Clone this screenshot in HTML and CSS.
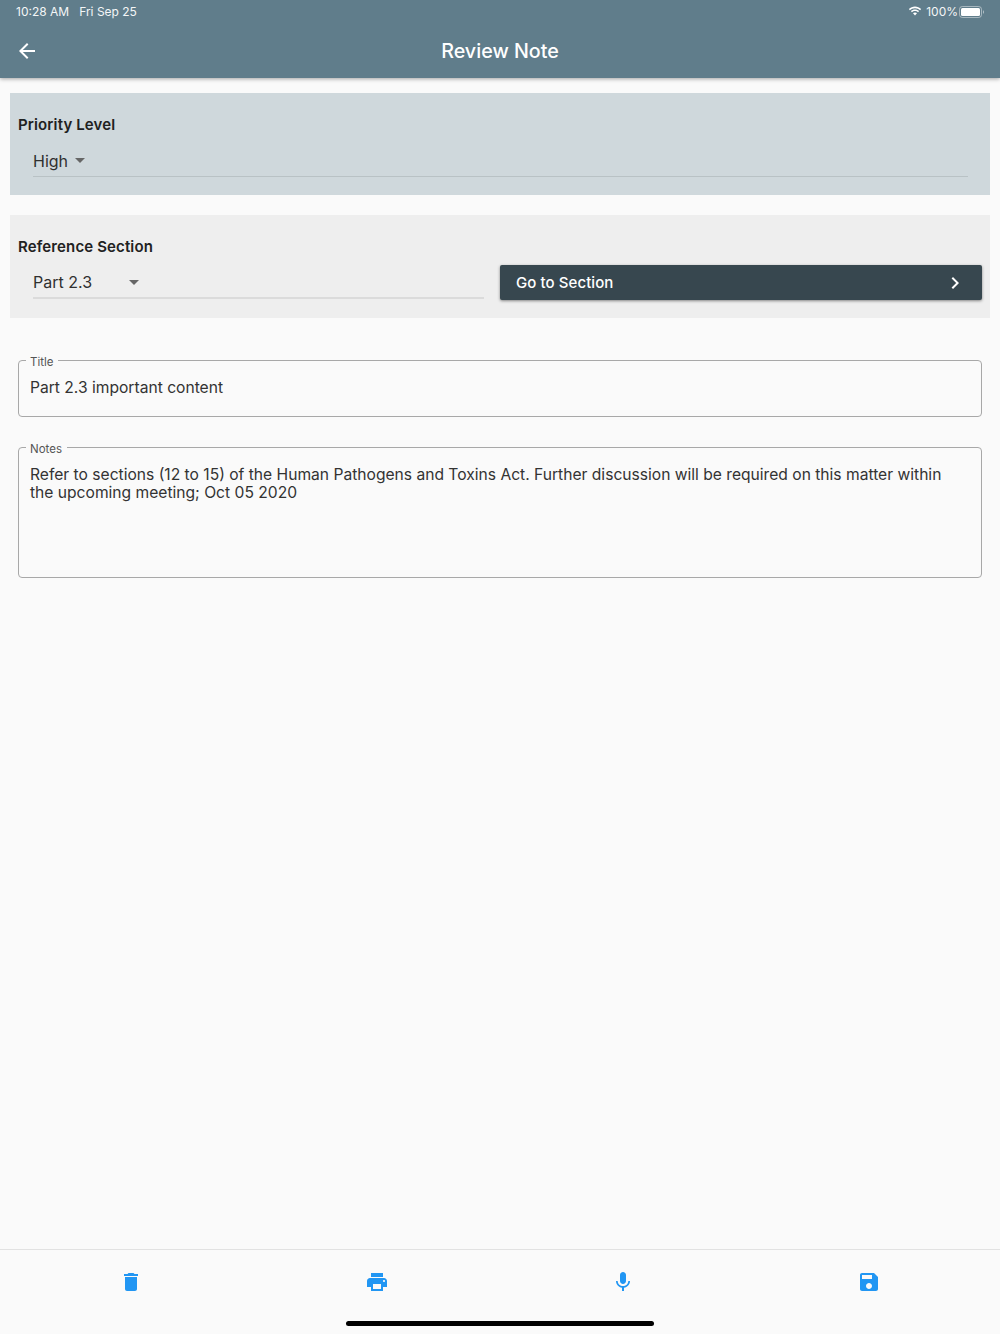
FILE: index.html
```html
<!DOCTYPE html>
<html lang="en">
<head>
<meta charset="utf-8">
<title>Review Note</title>
<link rel="stylesheet" href="styles.css">
</head>
<body>
<div class="page">
  <header class="appbar">
    <div class="status">
      <div class="status-left"><span>10:28 AM</span><span>Fri Sep 25</span></div>
      <div class="status-right">
        <svg class="wifi" width="14" height="11" viewBox="0 0 14 11"><path d="M7 2.2c2 0 3.8.8 5.1 2l1-1.1C11.500 1.600 9.400.600 7 .6S2.500 1.600.9 3.100l1 1.100c1.300-1.200 3.100-2 5.100-2z" fill="#fff"/><path d="M7 5c1.200 0 2.300.5 3.100 1.200l1-1.100C10 4.100 8.600 3.500 7 3.500s-3 .6-4.100 1.600l1 1.100C4.700 5.500 5.800 5 7 5z" fill="#fff"/><path d="M7 6.400c-.8 0-1.500.3-2 .8L7 9.600l2-2.400c-.5-.5-1.200-.8-2-.8z" fill="#fff"/></svg>
        <span>100%</span>
        <svg class="battery" width="26" height="12" viewBox="0 0 26 12"><rect x=".5" y=".5" width="22" height="11" rx="2.800" fill="none" stroke="#fff" stroke-opacity=".45"/><rect x="2" y="2" width="19" height="8" rx="1.500" fill="#fff"/><path d="M24 4.200c.7.200 1 .9 1 1.800s-.3 1.600-1 1.800z" fill="#fff" fill-opacity=".5"/></svg>
      </div>
    </div>
    <div class="toolbar">
      <svg class="back" width="24" height="24" viewBox="0 0 24 24"><path d="M20 11H7.830l5.590-5.590L12 4l-8 8 8 8 1.410-1.410L7.830 13H20v-2z" fill="#fff"/></svg>
      <h1>Review Note</h1>
    </div>
  </header>

  <main class="content">
    <section class="panel panel-priority">
      <h2>Priority Level</h2>
      <div class="select select-full"><span>High</span><i class="caret"></i></div>
    </section>

    <section class="panel panel-ref">
      <h2>Reference Section</h2>
      <div class="ref-row">
        <div class="select select-half"><span class="select-wide">Part 2.3</span><i class="caret"></i></div>
        <button class="goto" type="button"><span>Go to Section</span>
          <svg width="24" height="24" viewBox="0 0 24 24"><path d="M10 6L8.590 7.410 13.170 12l-4.580 4.590L10 18l6-6z" fill="#fff"/></svg>
        </button>
      </div>
    </section>

    <fieldset class="field field-title">
      <legend>Title</legend>
      <p>Part 2.3 important content</p>
    </fieldset>

    <fieldset class="field field-notes">
      <legend>Notes</legend>
      <p>Refer to sections (12 to 15) of the Human Pathogens and Toxins Act. Further discussion will be required on this matter within the upcoming meeting; Oct 05 2020</p>
    </fieldset>
  </main>

  <footer class="bottombar">
    <div class="actions">
      <div class="action"><svg width="24" height="24" viewBox="0 0 24 24"><path d="M6 19c0 1.100.9 2 2 2h8c1.100 0 2-.9 2-2V7H6v12zM19 4h-3.500l-1-1h-5l-1 1H5v2h14V4z" fill="#2196f3"/></svg></div>
      <div class="action"><svg width="24" height="24" viewBox="0 0 24 24"><path d="M19 8H5c-1.660 0-3 1.340-3 3v6h4v4h12v-4h4v-6c0-1.660-1.340-3-3-3zm-3 11H8v-5h8v5zm3-7c-.55 0-1-.45-1-1s.45-1 1-1 1 .45 1 1-.45 1-1 1zm-1-9H6v4h12V3z" fill="#2196f3"/></svg></div>
      <div class="action"><svg width="24" height="24" viewBox="0 0 24 24"><path d="M12 14c1.660 0 2.990-1.340 2.990-3L15 5c0-1.660-1.340-3-3-3S9 3.340 9 5v6c0 1.660 1.340 3 3 3zm5.300-3c0 3-2.540 5.100-5.300 5.100S6.700 14 6.700 11H5c0 3.410 2.720 6.230 6 6.720V21h2v-3.280c3.280-.48 6-3.300 6-6.720h-1.700z" fill="#2196f3"/></svg></div>
      <div class="action"><svg width="24" height="24" viewBox="0 0 24 24"><path d="M17 3H5c-1.110 0-2 .9-2 2v14c0 1.100.89 2 2 2h14c1.100 0 2-.9 2-2V7l-4-4zm-5 16c-1.660 0-3-1.340-3-3s1.340-3 3-3 3 1.340 3 3-1.340 3-3 3zm3-10H5V5h10v4z" fill="#2196f3"/></svg></div>
    </div>
    <div class="home-indicator"></div>
  </footer>
</div>
</body>
</html>
```
FILE: styles.css
```css
* { box-sizing: border-box; }
html, body { margin: 0; padding: 0; }
body { background: #fafafa; font-family: Inter, "Liberation Sans", sans-serif; color: #212121; }
.page { width: 1000px; height: 1334px; display: flex; flex-direction: column; overflow: hidden; }

.appbar { height: 78px; background: #607d8b; color: #fff; box-shadow: 0 1px 4px rgba(0,0,0,.35); flex: none; position: relative; }
.status { height: 23px; padding: 0 15px 0 16px; display: flex; justify-content: space-between; align-items: center; font-size: 12px; color: #f4f6f7; }
.status-left { display: flex; gap: 10px; }
.status-right { display: flex; align-items: center; gap: 1px; }
.wifi { margin-right: 3px; }
.toolbar { height: 55px; padding-top: 1px; display: flex; align-items: center; justify-content: center; position: relative; }
.back { position: absolute; left: 15px; top: 16px; }
.toolbar h1 { margin: 0; font-size: 19.700px; font-weight: 500; line-height: 54px; }

.content { flex: 1; padding: 15px 10px 0; display: flex; flex-direction: column; }
.panel { height: 102px; padding: 21px 8px 0; }
.panel h2 { margin: 0; font-size: 15px; font-weight: 600; line-height: 22px; color: #212121; letter-spacing: .13px; }
.panel-priority { background: #cfd8dc; }
.panel-ref { background: #eee; margin-top: 20px; height: 103px; }

.select { height: 34px; margin: 7px 0 0; padding-top: 2px; border-bottom: 1px solid rgba(0,0,0,.1); display: flex; align-items: center; font-size: 16px; color: #303030; }
.select-full { margin-left: 15px; margin-right: 14px; }
.select-half { margin-left: 15px; width: 451px; border-bottom-width: 2px; border-bottom-color: rgba(0,0,0,.08); }
.select-wide { width: 90px; }
.caret { width: 0; height: 0; margin-left: 7px; border-left: 5px solid transparent; border-right: 5px solid transparent; border-top: 5px solid #666; }
.select-wide + .caret { margin-left: 6px; }

.ref-row { display: flex; align-items: flex-start; gap: 16px; }
.goto { margin-top: 7px; flex: 1; height: 35px; padding: 0 15px 0 16px; background: #37474f; color: #fff; border: 0; border-radius: 2px; box-shadow: 0 1px 3px rgba(0,0,0,.45); display: flex; align-items: center; justify-content: space-between; font: 500 15px Inter, "Liberation Sans", sans-serif; letter-spacing: .08px; }

.field { margin: 0 8px; padding: 0 11px; border: 1px solid #a8a8a8; border-radius: 4px; min-inline-size: 0; }
.field legend { padding: 3px 5px 0 4px; margin-left: -4px; font-size: 11.500px; line-height: 14px; color: #555; }
.field p { margin: 0; padding-right: 5px; font-size: 15.620px; line-height: 18px; color: #333; }
.field-title { margin-top: 34px; height: 65px; }
.field-title p { padding-top: 10px; }
.field-notes { margin-top: 22px; height: 139px; }
.field-notes p { padding-top: 10px; }

.bottombar { height: 85px; flex: none; border-top: 1px solid #e2e2e2; position: relative; }
.actions { padding: 8px 8px 0; display: grid; grid-template-columns: repeat(4, 1fr); }
.action { height: 48px; display: flex; align-items: center; justify-content: center; }
.home-indicator { position: absolute; left: 346px; bottom: 8px; width: 308px; height: 5px; border-radius: 3px; background: #000; }
```
